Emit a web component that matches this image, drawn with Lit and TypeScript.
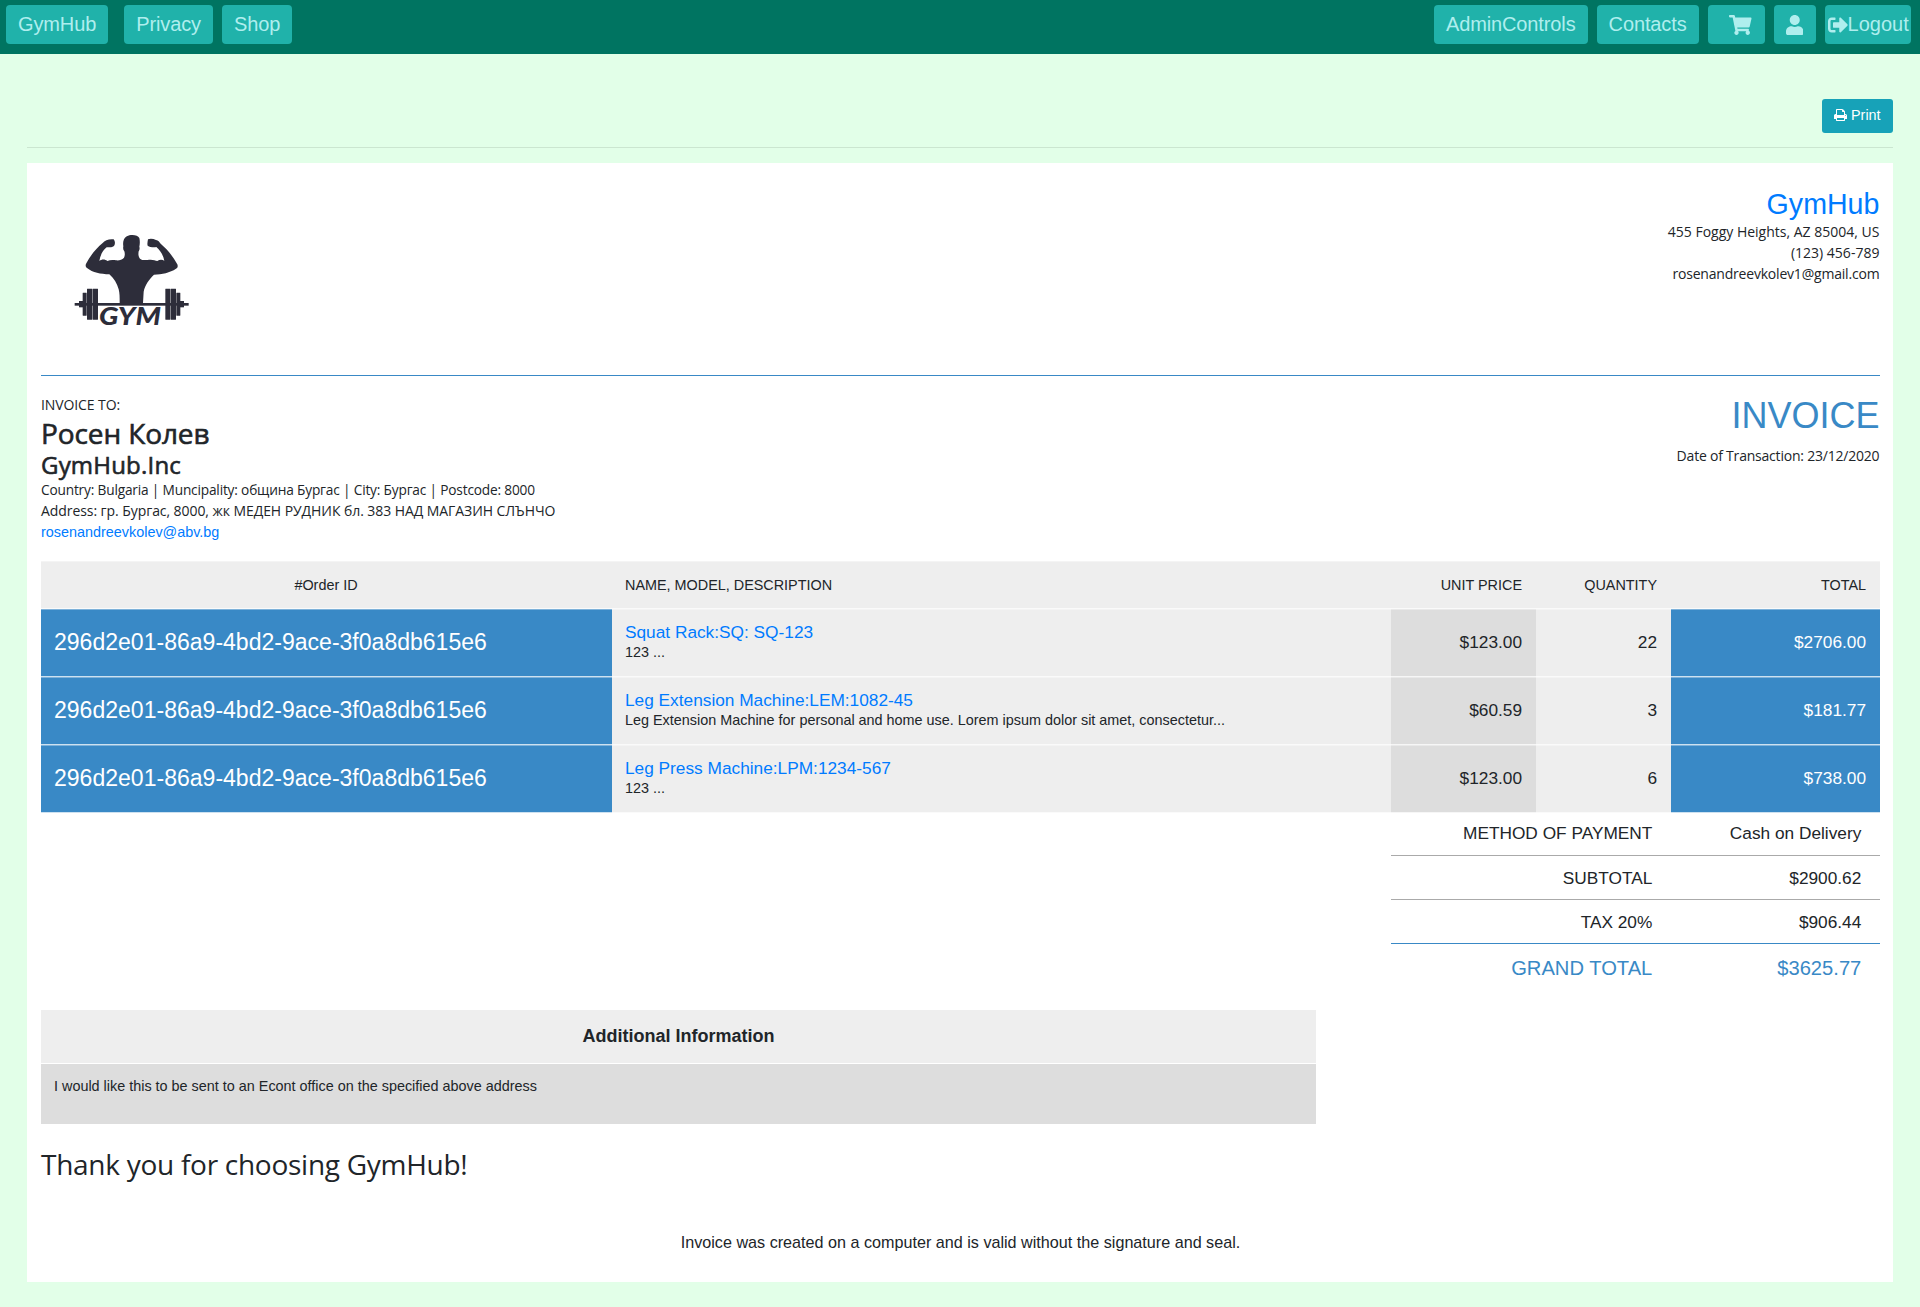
import { LitElement, html, css, svg } from "lit";
import { customElement, property } from "lit/decorators.js";

interface Item {
  order: string;
  name: string;
  description: string;
  price: string;
  quantity: number;
  total: string;
}

const ORDER_ID = "296d2e01-86a9-4bd2-9ace-3f0a8db615e6";

const ITEMS: Item[] = [
  { order: ORDER_ID, name: "Squat Rack:SQ: SQ-123", description: "123 ...", price: "$123.00", quantity: 22, total: "$2706.00" },
  { order: ORDER_ID, name: "Leg Extension Machine:LEM:1082-45", description: "Leg Extension Machine for personal and home use. Lorem ipsum dolor sit amet, consectetur...", price: "$60.59", quantity: 3, total: "$181.77" },
  { order: ORDER_ID, name: "Leg Press Machine:LPM:1234-567", description: "123 ...", price: "$123.00", quantity: 6, total: "$738.00" },
];

const ICONS: Record<string, { box: string; w: number; h: number; d: string }> = {
  cart: { box: "0 0 576 512", w: 22.5, h: 20, d: "M528.12 301.319l47.273-208C578.806 78.301 567.391 64 551.99 64H159.208l-9.166-44.81C147.758 8.021 137.93 0 126.529 0H24C10.745 0 0 10.745 0 24v16c0 13.255 10.745 24 24 24h69.883l70.248 343.435C147.325 417.1 136 435.222 136 456c0 30.928 25.072 56 56 56s56-25.072 56-56c0-15.674-6.447-29.835-16.824-40h209.647C430.447 426.165 424 440.326 424 456c0 30.928 25.072 56 56 56s56-25.072 56-56c0-22.172-12.888-41.332-31.579-50.405l5.517-24.276c3.413-15.018-8.002-29.319-23.403-29.319H218.117l-6.545-32h293.145c11.206 0 20.92-7.754 23.403-18.681z" },
  user: { box: "0 0 448 512", w: 17.5, h: 20, d: "M224 256c70.7 0 128-57.3 128-128S294.7 0 224 0 96 57.3 96 128s57.3 128 128 128zm89.6 32h-16.7c-22.2 10.2-46.9 16-72.9 16s-50.6-5.8-72.9-16h-16.7C60.2 288 0 348.2 0 422.4V464c0 26.5 21.5 48 48 48h352c26.5 0 48-21.5 48-48v-41.6c0-74.2-60.2-134.4-134.4-134.4z" },
  logout: { box: "0 0 512 512", w: 20, h: 20, d: "M497 273L329 441c-15 15-41 4.5-41-17v-96H152c-13.3 0-24-10.7-24-24v-96c0-13.3 10.7-24 24-24h136V88c0-21.4 25.9-32 41-17l168 168c9.3 9.4 9.3 24.6 0 34zM192 436v-40c0-6.6-5.4-12-12-12H96c-17.7 0-32-14.3-32-32V160c0-17.7 14.3-32 32-32h84c6.6 0 12-5.4 12-12V76c0-6.6-5.4-12-12-12H96c-53 0-96 43-96 96v192c0 53 43 96 96 96h84c6.6 0 12-5.4 12-12z" },
  print: { box: "0 128 1664 1536", w: 13, h: 12, d: "M384 1536h896v-256H384v256zm0-640h896V512h-160q-40 0-68-28t-28-68V256H384v640zm1152 64q0-26-19-45t-45-19-45 19-19 45 19 45 45 19 45-19 19-45zm128 0v416q0 13-9.5 22.5t-22.5 9.5h-224v160q0 40-28 68t-68 28H352q-40 0-68-28t-28-68v-160H32q-13 0-22.5-9.5T0 1376V960q0-79 56.5-135.5T192 768h64V224q0-40 28-68t68-28h672q40 0 88 20t76 48l152 152q28 28 48 76t20 88v256h64q79 0 135.5 56.5T1664 960z" },
};

@customElement("glyph-icon")
export class GlyphIcon extends LitElement {
  @property() name = "cart";
  static styles = css`
    :host { display: inline-flex; }
    svg { display: block; fill: currentColor; fill-rule: evenodd; }
  `;
  render() {
    const i = ICONS[this.name];
    return html`<svg width=${i.w} height=${i.h} viewBox=${i.box}><path d=${i.d}></path></svg>`;
  }
}

@customElement("gym-logo")
export class GymLogo extends LitElement {
  static styles = css`
    :host { display: block; }
    svg { display: block; fill: #2d2d3a; }
    .word { font: italic 900 76px Lato, "Open Sans", "Liberation Sans", sans-serif; }
  `;
  render() {
    const plates = [
      [98, 248, 12, 69], [111, 236, 16, 93], [128, 236, 16, 93],
      [346, 236, 15, 93], [362, 236, 16, 93], [379, 248, 12, 69],
    ];
    return html`<svg width="160" height="140" viewBox="0 0 480 420">
      <path d="M221 91C224 80 235 75 247 75C257 75 265 78 268 84C270 92 270 101 268 110C270 115 268 121 266 124C265 131 264 138 270 146C276 151 285 150 292 150C306 147 315 151 322 153C328 149 336 148 343 152C340 137 332 122 319 111C312 113 300 112 293 107C291 101 293 94 294 88C300 85 310 86 318 90C325 91 328 96 332 101C350 116 368 138 381 161C385 167 383 174 378 176C360 188 336 193 312 194C297 208 285 225 281 245L279 279H209C209 262 209 249 206 238C201 220 192 205 178 193C152 192 128 188 111 174C106 170 106 165 109 160C121 137 139 114 158 99C164 91 178 86 191 88C196 94 196 102 192 108C185 113 175 112 170 112C158 121 151 136 148 153C155 147 165 147 172 153C180 149 190 149 198 151C207 152 216 150 222 143C225 137 225 131 223 124C219 119 219 114 220 109C219 103 219 96 221 91Z"></path>
      <rect x="74" y="279" width="14" height="8"></rect>
      <rect x="87" y="273" width="12" height="19"></rect>
      ${plates.map(([x, y, w, h]) => svg`<rect x=${x} y=${y} width=${w} height=${h} rx="1"></rect>`)}
      <rect x="96" y="279" width="300" height="8"></rect>
      <rect x="390" y="273" width="12" height="19"></rect>
      <rect x="402" y="279" width="14" height="8"></rect>
      <text class="word" x="147" y="346" textLength="186" lengthAdjust="spacingAndGlyphs">GYM</text>
    </svg>`;
  }
}

@customElement("app-root")
export class AppRoot extends LitElement {
  static styles = css`
    :host {
      display: block;
      min-height: 1307px;
      background: #e2ffe8;
      color: #212529;
      font-family: "Liberation Sans", Arial, sans-serif;
    }
    * { box-sizing: border-box; }
    h1, h2, h3, p { margin: 0; font-weight: 400; }
    nav {
      display: flex;
      justify-content: space-between;
      height: 54px;
      padding: 5px 9px 0 6px;
      background: #007461;
    }
    .group { display: flex; gap: 9px; }
    .brand { margin-right: 7px; }
    .tab {
      display: flex;
      align-items: center;
      height: 39px;
      padding: 0 12px 1px;
      border-radius: 4px;
      background: #20b2aa;
      color: #afeeee;
      font-size: 20px;
      line-height: 30px;
      letter-spacing: -0.12px;
    }
    .cart { padding: 1px 13px 0 21.5px; }
    .user { padding: 1px 12.25px 0; }
    .out { padding: 0 2.3px 1px 3px; letter-spacing: 0; }
    .out glyph-icon { padding-top: 1px; }
    main { padding: 45px 27px 25px; }
    .toolbar {
      display: flex;
      justify-content: flex-end;
      height: 49px;
      border-bottom: 1px solid #cbe6d0;
    }
    .print {
      display: flex;
      align-items: center;
      gap: 4px;
      height: 34px;
      width: 71px;
      padding: 0 0 2px 12px;
      border-radius: 3px;
      background: #17a2b8;
      color: #fff;
      font-size: 14.4px;
    }
    .sheet {
      height: 1119px;
      margin-top: 15px;
      padding: 13px 13px 0 14px;
      background: #fff;
    }
    .segoe { font-family: "Open Sans", "Noto Sans", sans-serif; }
    .small { font-size: 14px; line-height: 21px; }
    .head {
      display: flex;
      justify-content: space-between;
      height: 200px;
      border-bottom: 1px solid #3989c6;
    }
    .head gym-logo { padding: 34px 0 0 9px; }
    .right { text-align: right; padding-right: 0.6px; }
    .company { padding-top: 11px; }
    .company h2 { color: #007bff; font-size: 28.6px; line-height: 34px; }
    .mail { letter-spacing: -0.2px; }
    .parties { display: flex; justify-content: space-between; height: 185px; padding-top: 18px; }
    .label { letter-spacing: -0.1px; }
    .client { margin-top: 1px; font-size: 28px; line-height: 34px; letter-spacing: -0.1px; -webkit-text-stroke: 0.6px currentColor; }
    .firm { font-size: 24px; line-height: 29px; letter-spacing: 0.2px; -webkit-text-stroke: 0.6px currentColor; }
    .region { font-size: 13.7px; letter-spacing: -0.18px; }
    .street { letter-spacing: -0.07px; }
    .mailto { padding-top: 1px; font-size: 14.4px; }
    .link { color: #007bff; }
    .title { color: #3989c6; font-size: 36px; line-height: 43px; }
    .date { padding-top: 8px; letter-spacing: -0.21px; }
    .table { display: grid; grid-template-columns: 571px 779px 145px 135px 209px; }
    .cell {
      display: flex;
      flex-direction: column;
      justify-content: center;
      height: 68px;
      padding: 0 14px 1px 13px;
      background: #eee;
      border-top: 1px solid rgba(255, 255, 255, 0.35);
      border-bottom: 1px solid rgba(255, 255, 255, 0.75);
      font-size: 17.28px;
      line-height: 21px;
    }
    .item { padding-bottom: 2px; }
    .th { height: 48px; font-size: 14.4px; line-height: 22px; }
    .mid { text-align: center; }
    .end { text-align: right; }
    .blue { background: #3989c6; color: #fff; }
    .grey { background: #ddd; }
    .id { font-size: 23.04px; }
    .desc { font-size: 14.4px; line-height: 19px; }
    .totals { display: grid; grid-template-columns: 280px 209px; width: 489px; margin-left: auto; }
    .sum {
      height: 44px;
      padding: 8.5px 18.7px 0 0;
      border-bottom: 1px solid #aaa;
      font-size: 17.28px;
      line-height: 26px;
      text-align: right;
    }
    .sum.first { height: 43px; padding-top: 7px; }
    .sum.last { border-color: #3989c6; }
    .sum.grand { border: 0; height: 66px; padding-top: 11px; color: #3989c6; font-size: 20.16px; }
    .note { width: 1275px; }
    .note h3 {
      height: 54px;
      padding-top: 15px;
      background: #eee;
      border-bottom: 1px solid #fff;
      font-size: 18px;
      font-weight: 700;
      line-height: 22px;
      text-align: center;
    }
    .note p { height: 60px; padding: 12px 13px; background: #ddd; font-size: 14.4px; line-height: 20px; }
    .thanks { padding-top: 20px; font-size: 28px; line-height: 40px; letter-spacing: -0.27px; }
    .footer { padding-top: 46px; font-size: 16.16px; line-height: 24px; text-align: center; }
  `;

  render() {
    return html`
      <nav>
        <div class="group">
          <a class="tab brand">GymHub</a><a class="tab">Privacy</a><a class="tab">Shop</a>
        </div>
        <div class="group">
          <a class="tab">AdminControls</a>
          <a class="tab">Contacts</a>
          <a class="tab cart"><glyph-icon name="cart"></glyph-icon></a>
          <a class="tab user"><glyph-icon name="user"></glyph-icon></a>
          <a class="tab out"><glyph-icon name="logout"></glyph-icon>Logout</a>
        </div>
      </nav>
      <main>
        <div class="toolbar">
          <a class="print"><glyph-icon name="print"></glyph-icon>Print</a>
        </div>
        <section class="sheet">
          <header class="head">
            <gym-logo></gym-logo>
            <div class="company right">
              <h2>GymHub</h2>
              <p class="segoe small">455 Foggy Heights, AZ 85004, US</p>
              <p class="segoe small">(123) 456-789</p>
              <p class="segoe small mail">rosenandreevkolev1@gmail.com</p>
            </div>
          </header>
          <div class="parties">
            <div>
              <p class="segoe small label">INVOICE TO:</p>
              <h2 class="segoe client">Росен Колев</h2>
              <h3 class="segoe firm">GymHub.Inc</h3>
              <p class="segoe small region">Country: Bulgaria | Muncipality: община Бургас | City: Бургас | Postcode: 8000</p>
              <p class="segoe small street">Address: гр. Бургас, 8000, жк МЕДЕН РУДНИК бл. 383 НАД МАГАЗИН СЛЪНЧО</p>
              <p class="small link mailto">rosenandreevkolev@abv.bg</p>
            </div>
            <div class="right">
              <h1 class="title">INVOICE</h1>
              <p class="segoe small date">Date of Transaction: 23/12/2020</p>
            </div>
          </div>
          <div class="table">
            <div class="cell th mid">#Order ID</div>
            <div class="cell th">NAME, MODEL, DESCRIPTION</div>
            <div class="cell th end">UNIT PRICE</div>
            <div class="cell th end">QUANTITY</div>
            <div class="cell th end">TOTAL</div>
            ${ITEMS.map((i) => html`
              <div class="cell blue id">${i.order}</div>
              <div class="cell item"><span class="link">${i.name}</span><span class="desc">${i.description}</span></div>
              <div class="cell grey end">${i.price}</div>
              <div class="cell end">${i.quantity}</div>
              <div class="cell blue end">${i.total}</div>
            `)}
          </div>
          <div class="totals">
            <div class="sum first">METHOD OF PAYMENT</div><div class="sum first">Cash on Delivery</div>
            <div class="sum">SUBTOTAL</div><div class="sum">$2900.62</div>
            <div class="sum last">TAX 20%</div><div class="sum last">$906.44</div>
            <div class="sum grand">GRAND TOTAL</div><div class="sum grand">$3625.77</div>
          </div>
          <div class="note">
            <h3>Additional Information</h3>
            <p>I would like this to be sent to an Econt office on the specified above address</p>
          </div>
          <p class="segoe thanks">Thank you for choosing GymHub!</p>
          <p class="footer">Invoice was created on a computer and is valid without the signature and seal.</p>
        </section>
      </main>
    `;
  }
}
